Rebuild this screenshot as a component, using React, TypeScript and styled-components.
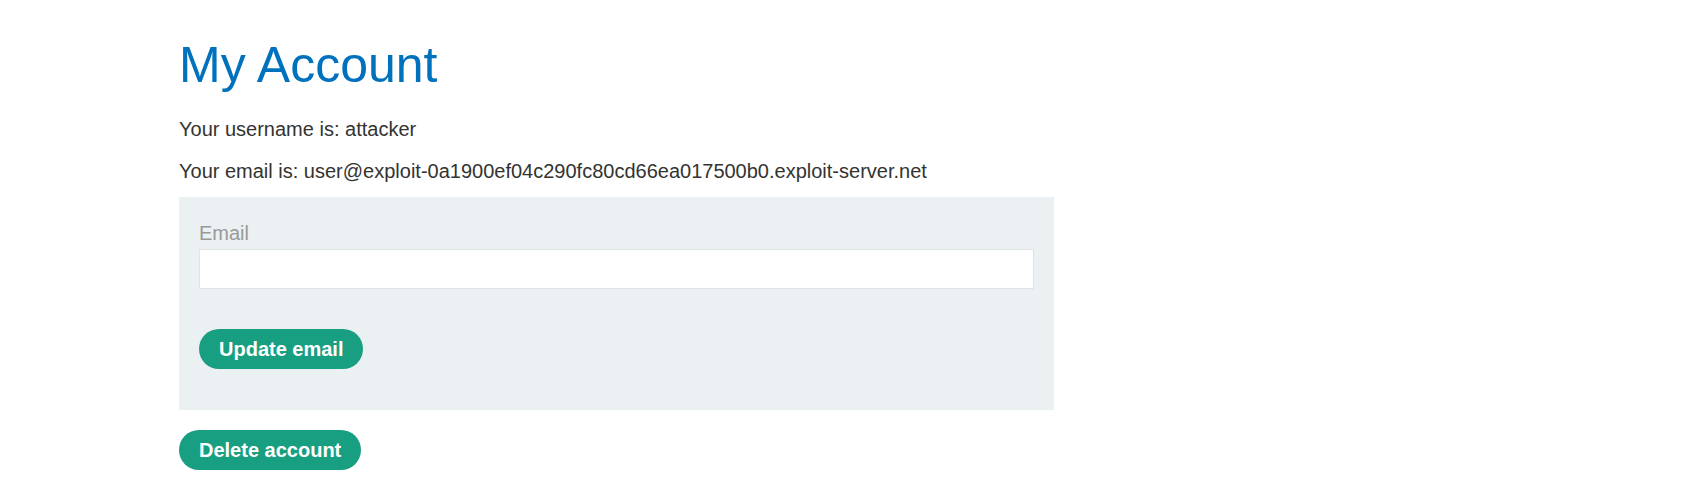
import React from "react";
import styled, { createGlobalStyle } from "styled-components";

const GlobalStyle = createGlobalStyle`
  html, body {
    margin: 0;
    padding: 0;
    background: #ffffff;
  }
  body {
    font-family: "Liberation Sans", Arial, Helvetica, sans-serif;
    color: #333332;
  }
`;

export default function App() {
  return (
    <>
      <GlobalStyle />
      <Page>
        <Title>My Account</Title>
        <Info>Your username is: attacker</Info>
        <Info>Your email is: user@exploit-0a1900ef04c290fc80cd66ea017500b0.exploit-server.net</Info>
        <EmailForm onSubmit={(e) => e.preventDefault()}>
          <FieldLabel htmlFor="email">Email</FieldLabel>
          <TextInput id="email" name="email" type="email" />
          <PillButton type="submit">Update email</PillButton>
        </EmailForm>
        <PillButton type="button">Delete account</PillButton>
      </Page>
    </>
  );
}

const Page = styled.div`
  display: flex;
  flex-direction: column;
  align-items: flex-start;
  padding: 38px 0 20px 179px;
`;

const Title = styled.h1`
  margin: 0 0 22px;
  font-size: 50px;
  line-height: 55px;
  font-weight: 400;
  color: #0071bc;
`;

const Info = styled.p`
  margin: 0 0 14px;
  font-size: 20px;
  line-height: 28px;

  &:last-of-type {
    margin-bottom: 12px;
  }
`;

const EmailForm = styled.form`
  box-sizing: border-box;
  width: 875px;
  display: flex;
  flex-direction: column;
  align-items: flex-start;
  padding: 22px 20px 41px;
  margin-bottom: 20px;
  background: #ebf0f2;
`;

const FieldLabel = styled.label`
  font-size: 20px;
  line-height: 28px;
  color: #999999;
  margin-bottom: 2px;
`;

const TextInput = styled.input`
  box-sizing: border-box;
  width: 100%;
  height: 40px;
  margin: 0 0 40px;
  padding: 0 10px;
  border: 1px solid #dfe3e6;
  background: #ffffff;
  font-family: inherit;
  font-size: 20px;
  outline: none;
`;

const PillButton = styled.button`
  display: inline-block;
  border: none;
  border-radius: 25px;
  padding: 6px 20px;
  background: #189e80;
  color: #ffffff;
  font-family: "Liberation Sans", Arial, Helvetica, sans-serif;
  font-size: 20px;
  line-height: 28px;
  font-weight: 700;
  cursor: pointer;
`;
